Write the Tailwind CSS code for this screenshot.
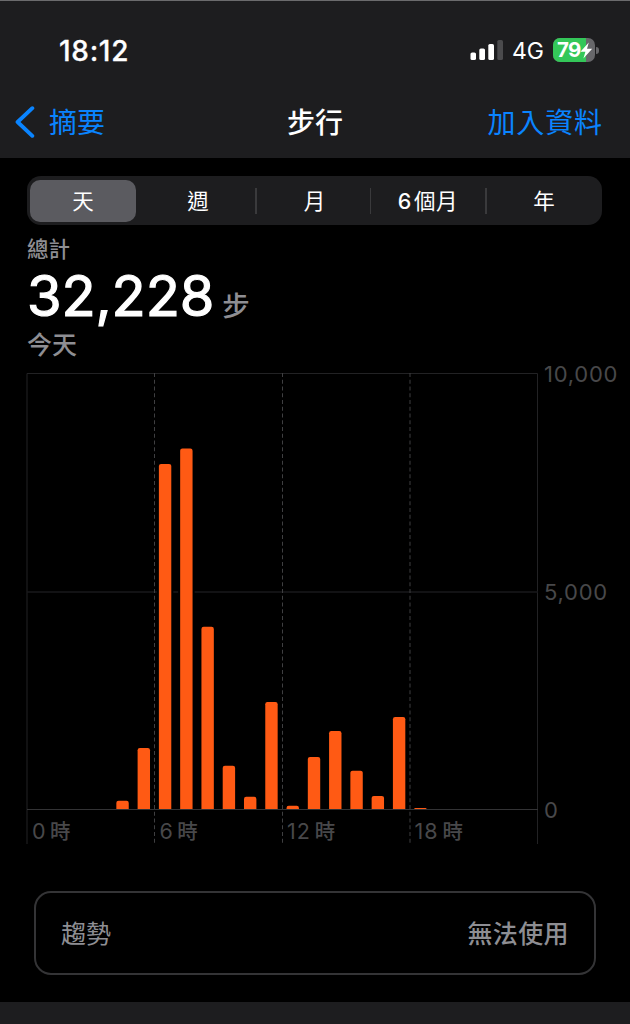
<!DOCTYPE html>
<html lang="zh-Hant">
<head>
  <meta charset="UTF-8">
  <meta name="viewport" content="width=device-width, initial-scale=1.0">
  <title>步行</title>
  <script src="https://cdn.jsdelivr.net/npm/@tailwindcss/browser@4"></script>
</head>
<body class="bg-black text-white font-['Inter','Noto_Sans_CJK_TC',sans-serif] overflow-hidden">
  <div class="flex flex-col w-[630px] h-[1024px] overflow-hidden">

    <header class="h-[158px] shrink-0 bg-[#1d1d1f] border-t border-[#6b6b6d]">
      <!-- Status bar -->
      <div class="flex items-center justify-between h-[98px] pl-[59px] pr-[31px]">
        <span class="pt-[2px] text-[28px] leading-none font-medium tracking-[0.7px] [-webkit-text-stroke:0.3px_white]">18:12</span>
        <div class="flex items-center">
          <svg class="w-[34px] h-[22px]" viewBox="0 0 34 22">
            <rect x="0.5" y="13.5" width="5.5" height="7.5" rx="1.6" fill="#fff"/>
            <rect x="9.3" y="9.5" width="5.7" height="11.5" rx="1.6" fill="#fff"/>
            <rect x="18.3" y="5" width="5.7" height="16" rx="1.6" fill="#fff"/>
            <rect x="27.3" y="1" width="5.7" height="20" rx="1.6" fill="#4b4b4d"/>
          </svg>
          <span class="ml-[8px] w-[33px] pt-[2px] text-[23px] leading-none tracking-[-0.1px]">4G</span>
          <div class="relative ml-[8px] w-[42px] h-[24px] rounded-[7px] overflow-hidden bg-[#67676a]">
            <div class="h-full w-[33px] bg-[#34c759]"></div>
            <span class="absolute left-[4px] top-[2px] text-[20.5px] leading-[20px] font-bold tracking-[-0.6px]">79</span>
            <svg class="absolute left-[27px] top-[4px] w-[13px] h-[17px]" viewBox="0 0 13 17">
              <path d="M8.8 0.4 L0.4 9.8 H5.4 L3.4 16.4 L12.2 6.8 H7 Z" fill="#fff"/>
            </svg>
          </div>
          <div class="ml-[1px] w-[3px] h-[7px] rounded-r-full bg-[#67676a]"></div>
        </div>
      </div>

      <!-- Navigation bar -->
      <nav class="grid grid-cols-3 items-center h-[46px] px-[15px] text-[28px] leading-none">
        <a class="flex items-center text-[#0a84ff]">
          <svg class="w-[20px] h-[32px]" viewBox="0 0 20 32" fill="none" stroke="#0a84ff" stroke-width="3.9" stroke-linecap="round" stroke-linejoin="round">
            <path d="M17.3 2.2 L2.6 16 L17.3 29.8"/>
          </svg>
          <span class="ml-[14px] pt-[2px]">摘要</span>
        </a>
        <h1 class="pt-[2px] text-center font-medium">步行</h1>
        <a class="pt-[2px] pr-[12px] text-right text-[#0a84ff] tracking-[0.9px]">加入資料</a>
      </nav>
    </header>

    <main class="flex flex-col grow">
      <!-- Range picker -->
      <div class="flex items-center mt-[18px] ml-[27px] w-[575px] h-[49px] shrink-0 p-[3px] rounded-[14px] bg-[#1d1d1f] text-[21.5px] leading-none text-center">
        <div class="flex items-center justify-center w-[106px] h-[42px] pt-[2px] rounded-[10px] bg-[#5b5b60]">天</div>
        <div class="w-[119px] pl-[5px] pt-[2px]">週</div>
        <div class="w-[2px] h-[26px] bg-[#3a3a3c]"></div>
        <div class="w-[113px] pl-[2px] pt-[2px]">月</div>
        <div class="w-[1px] h-[26px] bg-[#3a3a3c]"></div>
        <div class="w-[114px] pt-[2px] tracking-[0.6px]"><span class="mr-[2px] font-medium">6</span>個月</div>
        <div class="w-[2px] h-[26px] bg-[#3a3a3c]"></div>
        <div class="grow pl-[2px] pt-[2px]">年</div>
      </div>

      <!-- Total -->
      <section class="ml-[27px] text-[#8e8e93] font-medium">
        <p class="mt-[13px] text-[21.5px] leading-[22px]">總計</p>
        <div class="flex items-baseline mt-[7px] h-[58px] leading-[58px]">
          <span class="text-[56px] text-white font-normal tracking-[-0.1px] [-webkit-text-stroke:1.2px_white] [stroke-linejoin:round]">32,228</span>
          <span class="ml-[8px] text-[27.5px]">步</span>
        </div>
        <p class="mt-[7px] text-[25px] leading-[26px]">今天</p>
      </section>

      <!-- Hourly chart -->
      <section class="flex ml-[26px] mt-[15px] h-[472px] shrink-0 text-[#48484a]">
        <div class="relative w-[512px]">
          <svg class="block w-[512px] h-[472px]" viewBox="0 0 512 472">
            <g stroke="#222224" fill="none">
              <path d="M1 0.5 H511.5 V471 M1 0.5 V471"/>
              <path d="M1 219 H512" stroke="#19191b" stroke-width="1.5"/>
              <path d="M1 436.5 H512" stroke="#333335"/>
            </g>
            <g stroke="#3f3f41" stroke-dasharray="4 2.75">
              <path d="M128.5 0 V471"/>
              <path d="M256.5 0 V471"/>
              <path d="M384 0 V471"/>
            </g>
            <g id="bars" fill="#ff5a14"></g>
          </svg>
          <div class="absolute left-[1px] top-[447px] grid grid-cols-4 w-[511px] pl-[5px] text-[21.5px] leading-[22px] tracking-[0.5px]">
            <span>0<span class="ml-[4px] text-[20.5px] font-medium">時</span></span>
            <span class="pl-[1px]">6<span class="ml-[4px] text-[20.5px] font-medium">時</span></span>
            <span class="pl-[2px] tracking-[1px]">12<span class="ml-[4px] text-[20.5px] font-medium">時</span></span>
            <span class="pl-[3px] tracking-[1px]">18<span class="ml-[4px] text-[20.5px] font-medium">時</span></span>
          </div>
        </div>
        <div class="flex flex-col justify-between -mt-[10px] ml-[6px] h-[458px] text-[22px] leading-[22px] tracking-[0.75px]">
          <span>10,000</span>
          <span>5,000</span>
          <span>0</span>
        </div>
      </section>

      <!-- Trend -->
      <div class="flex items-center justify-between mt-[46px] mx-[34px] h-[84px] shrink-0 px-[25px] pt-[3px] rounded-[17px] border-2 border-[#343436] text-[25px] leading-none text-[#8e8e93]">
        <span>趨勢</span>
        <span class="font-medium tracking-[0.4px]">無法使用</span>
      </div>
      <div class="mt-[27px] grow bg-[#1d1d1f]"></div>
    </main>
  </div>

  <script>
    // Steps for each hour of the day
    const steps = [0, 0, 0, 0, 190, 1400, 7915, 8270, 4180, 990, 280, 2455, 75, 1195, 1790, 880, 300, 2110, 25, 0, 0, 0, 0, 0];
    const maxSteps = 10000;
    const plotHeight = 436;
    const slot = 510.6 / 24;

    document.getElementById('bars').innerHTML = steps.map((value, hour) => {
      if (!value) return '';
      const w = 12.4;
      const h = value / maxSteps * plotHeight;
      const r = Math.min(2.2, h);
      const x = 0.8 + slot * (hour + 0.5) - w / 2;
      const y = plotHeight - h;
      // black outline keeps the grid lines off the bar
      return `
        <rect x="${x - 2}" y="${y}" width="${w + 4}" height="${h}" fill="#000"/>
        <path d="M${x} ${plotHeight} V${y + r} Q${x} ${y} ${x + r} ${y} H${x + w - r} Q${x + w} ${y} ${x + w} ${y + r} V${plotHeight} Z"/>
      `;
    }).join('');
  </script>
</body>
</html>
